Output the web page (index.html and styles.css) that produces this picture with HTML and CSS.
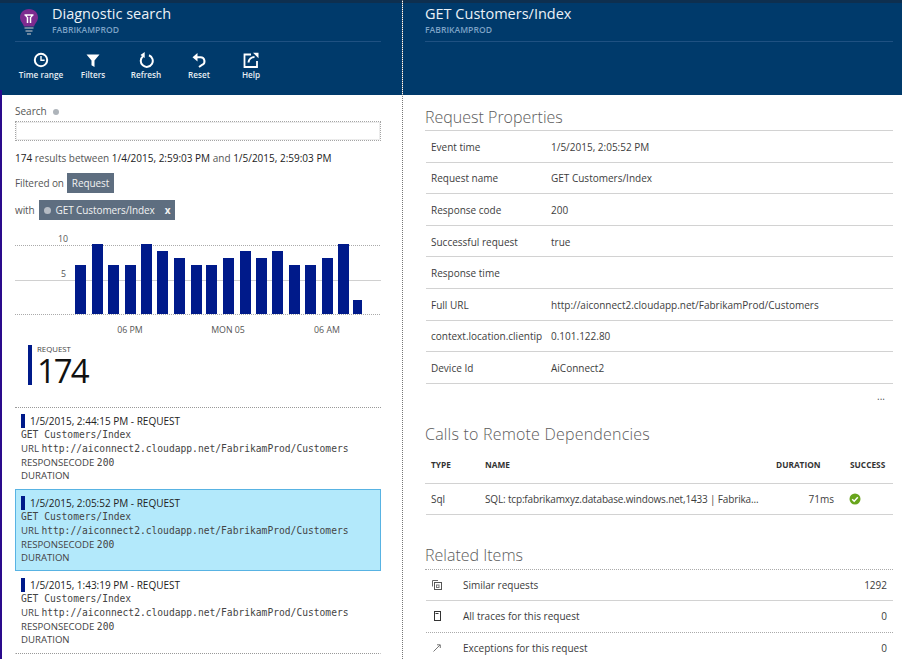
FILE: index.html
```html
<!DOCTYPE html>
<html lang="en">
<head>
<meta charset="utf-8">
<title>Diagnostic search</title>
<link rel="stylesheet" href="styles.css">
</head>
<body>
<div class="page">
  <section class="blade blade-left">
    <header class="head">
      <div class="titlebar">
        <svg class="logo" width="20" height="28" viewBox="0 0 20 28">
          <path d="M10 1C4.6 1 1 4.8 1 9.4c0 3.8 3.1 5.6 3.9 9.1h10.2c.8-3.5 3.900-5.300 3.900-9.100C19 4.800 15.400 1 10 1z" fill="#7d2b8f"/>
          <path d="M5.500 7h9M6.500 7l1.500 2M13.500 7l-1.500 2M8.500 9v6M11.500 9v6" stroke="#fff" stroke-width="1.500" fill="none"/>
          <path d="M5.500 20h9M6.500 23h7M8 26h4" stroke="#8d9eb0" stroke-width="1.500" fill="none"/>
        </svg>
        <div class="titles">
          <h1>Diagnostic search</h1>
          <p class="sub">FABRIKAMPROD</p>
        </div>
      </div>
      <nav class="toolbar">
        <a class="tool tool-time">
          <svg width="16" height="16" viewBox="0 0 16 16"><circle cx="8" cy="8" r="6.200" fill="none" stroke="#fff" stroke-width="2"/><path d="M8 4v4.300h3.600" fill="none" stroke="#fff" stroke-width="1.400"/></svg>
          <span>Time range</span>
        </a>
        <a class="tool tool-filter">
          <svg width="16" height="16" viewBox="0 0 16 16"><path d="M1.500 2.500h13L9.500 8.500V15l-3-1.800V8.500z" fill="#fff"/></svg>
          <span>Filters</span>
        </a>
        <a class="tool tool-refresh">
          <svg width="16" height="16" viewBox="0 0 16 16"><path d="M5 4.200A6 6 0 1 0 11 3.300" fill="none" stroke="#fff" stroke-width="2"/><path d="M6.700 .3v6L2.500 3.300z" fill="#fff" transform="translate(0 -.3)"/></svg>
          <span>Refresh</span>
        </a>
        <a class="tool tool-reset">
          <svg width="16" height="16" viewBox="0 0 16 16"><path d="M3 5.200h6.500a4 4 0 0 1 1.500 7.700L8 15" fill="none" stroke="#fff" stroke-width="2"/><path d="M6.500 1L1.500 5.200l5 4.300z" fill="#fff"/></svg>
          <span>Reset</span>
        </a>
        <a class="tool tool-help">
          <svg width="16" height="16" viewBox="0 0 16 16"><path d="M8 2.500H1.500v12.500h12.500V9" fill="none" stroke="#fff" stroke-width="1.800"/><path d="M5.500 10.500c.3-3.500 3-5.500 6-5.500" fill="none" stroke="#fff" stroke-width="2"/><path d="M10 .8h5.500v5.500z" fill="#fff"/></svg>
          <span>Help</span>
        </a>
      </nav>
    </header>
    <div class="body body-left">
      <label class="search-label">Search <i class="info"></i></label>
      <div class="search-box"></div>
      <p class="results"><b>174</b> results between <b>1/4/2015, 2:59:03 PM</b> and <b>1/5/2015, 2:59:03 PM</b></p>
      <p class="filter-line">Filtered on <span class="tag">Request</span></p>
      <p class="filter-line filter-with">with <span class="tag"><i class="tag-dot"></i>GET Customers/Index<em class="tag-x">x</em></span></p>
      <svg class="chart" width="366" height="104" viewBox="0 0 366 104">
        <g class="grid">
          <line class="dot" x1="0" x2="366" y1="11.500" y2="11.500"/>
          <line class="solid" x1="0" x2="366" y1="46.500" y2="46.500"/>
          <line class="dot" x1="0" x2="366" y1="80.500" y2="80.500"/>
        </g>
        <g class="bars">
          <rect x="60" y="31" width="11" height="49"/><rect x="77" y="10" width="11" height="70"/>
          <rect x="93" y="31" width="11" height="49"/><rect x="110" y="31" width="11" height="49"/>
          <rect x="126" y="10" width="11" height="70"/><rect x="142" y="17" width="11" height="63"/>
          <rect x="159" y="24" width="11" height="56"/><rect x="176" y="31" width="11" height="49"/>
          <rect x="191" y="31" width="11" height="49"/><rect x="208" y="24" width="11" height="56"/>
          <rect x="225" y="17" width="11" height="63"/><rect x="241" y="24" width="11" height="56"/>
          <rect x="257" y="17" width="11" height="63"/><rect x="274" y="31" width="11" height="49"/>
          <rect x="290" y="31" width="11" height="49"/><rect x="307" y="24" width="11" height="56"/>
          <rect x="323" y="10" width="11" height="70"/><rect x="338" y="66" width="9" height="14"/>
        </g>
        <g class="axis">
          <text x="43" y="8">10</text><text x="46" y="43">5</text>
          <text x="115" y="99" text-anchor="middle">06 PM</text>
          <text x="213" y="99" text-anchor="middle">MON 05</text>
          <text x="312" y="99" text-anchor="middle">06 AM</text>
        </g>
      </svg>
      <div class="metric">
        <small>REQUEST</small>
        <strong>174</strong>
      </div>
      <div class="list">
        <article class="item">
          <h3>1/5/2015, 2:44:15 PM - REQUEST</h3>
          <p class="mono">GET Customers/Index</p>
          <p>URL <span class="mono">http://aiconnect2.cloudapp.net/FabrikamProd/Customers</span></p>
          <p>RESPONSECODE <span class="mono">200</span></p>
          <p>DURATION</p>
        </article>
        <article class="item selected">
          <h3>1/5/2015, 2:05:52 PM - REQUEST</h3>
          <p class="mono">GET Customers/Index</p>
          <p>URL <span class="mono">http://aiconnect2.cloudapp.net/FabrikamProd/Customers</span></p>
          <p>RESPONSECODE <span class="mono">200</span></p>
          <p>DURATION</p>
        </article>
        <article class="item">
          <h3>1/5/2015, 1:43:19 PM - REQUEST</h3>
          <p class="mono">GET Customers/Index</p>
          <p>URL <span class="mono">http://aiconnect2.cloudapp.net/FabrikamProd/Customers</span></p>
          <p>RESPONSECODE <span class="mono">200</span></p>
          <p>DURATION</p>
        </article>
      </div>
    </div>
  </section>
  <section class="blade blade-right">
    <header class="head">
      <div class="titlebar titlebar-right">
        <div class="titles">
          <h1>GET Customers/Index</h1>
          <p class="sub">FABRIKAMPROD</p>
        </div>
      </div>
    </header>
    <div class="body body-right">
      <h2 class="h-props">Request Properties</h2>
      <dl class="props">
        <div><dt>Event time</dt><dd>1/5/2015, 2:05:52 PM</dd></div>
        <div><dt>Request name</dt><dd>GET Customers/Index</dd></div>
        <div><dt>Response code</dt><dd>200</dd></div>
        <div><dt>Successful request</dt><dd>true</dd></div>
        <div><dt>Response time</dt><dd></dd></div>
        <div><dt>Full URL</dt><dd>http://aiconnect2.cloudapp.net/FabrikamProd/Customers</dd></div>
        <div><dt>context.location.clientip</dt><dd>0.101.122.80</dd></div>
        <div><dt>Device Id</dt><dd>AiConnect2</dd></div>
      </dl>
      <div class="more">...</div>
      <h2 class="h-calls">Calls to Remote Dependencies</h2>
      <div class="calls calls-head">
        <span class="c-type">TYPE</span><span class="c-name">NAME</span><span class="c-dur">DURATION</span><span class="c-ok">SUCCESS</span>
      </div>
      <div class="calls calls-row">
        <span class="c-type">Sql</span><span class="c-name c-trunc">SQL: tcp:fabrikamxyz.database.windows.net,1433 | Fabrika...</span><span class="c-dur c-num">71ms</span>
        <span class="c-ok"><svg width="12" height="12" viewBox="0 0 12 12"><circle cx="6" cy="6" r="5.500" fill="#68a51c"/><path d="M3.200 6.200l2 2 3.600-4" fill="none" stroke="#fff" stroke-width="1.500"/></svg></span>
      </div>
      <h2 class="h-related">Related Items</h2>
      <ul class="related">
        <li>
          <svg width="12" height="12" viewBox="0 0 12 12"><path d="M1.500 7.500V1.500h5.500" fill="none" stroke="#666"/><rect x="3.500" y="3.500" width="7" height="7" fill="#fff" stroke="#555"/><rect x="5.500" y="6" width="2.500" height="2.500" fill="none" stroke="#777"/></svg>
          <span>Similar requests</span><b>1292</b>
        </li>
        <li>
          <svg width="12" height="12" viewBox="0 0 12 12"><rect x="3.500" y="1.500" width="6" height="9" fill="none" stroke="#333"/><path d="M4.500 3.500h3" stroke="#333"/></svg>
          <span>All traces for this request</span><b>0</b>
        </li>
        <li>
          <svg width="12" height="12" viewBox="0 0 12 12"><path d="M2.500 9.500L9 3M6 2.800h3.300V6" fill="none" stroke="#777"/></svg>
          <span>Exceptions for this request</span><b>0</b>
        </li>
      </ul>
    </div>
  </section>
</div>
</body>
</html>
```
FILE: styles.css
```css
* { box-sizing: border-box; }
html, body { margin: 0; padding: 0; height: 100%; overflow: hidden; background: #fff; }
body { font-family: "Open Sans", "Liberation Sans", sans-serif; font-size: 10px; color: #3b3b3b; }
p, h1, h2, h3, dl, dd, ul { margin: 0; padding: 0; }
.page { display: flex; width: 902px; height: 659px; }
.blade { display: flex; flex-direction: column; }
.blade-left { width: 402px; }
.blade-right { width: 500px; border-left: 1px dotted #777; }
.head { height: 95px; background: #003a6b; border-top: 3px solid #0e2f4f; }
.titlebar { height: 39px; margin: 0 21px 0 15px; display: flex; gap: 13px; border-bottom: 1px solid #1f5182; }
.titlebar-right { margin: 0 9px 0 22px; }
.logo { margin: 5px 0 0 4px; }
.titles h1 { font-size: 14.5px; font-weight: 400; line-height: 22px; color: #eaf1f7; }
.titles .sub { font-size: 8.600px; font-weight: 600; line-height: 11px; color: #7da3c6; }
.toolbar { display: flex; margin-left: 19px; padding-top: 10px; }
.tool { display: flex; flex-direction: column; align-items: center; gap: 1px; color: #e6edf3; font-size: 8.200px; font-weight: 600; line-height: 12px; white-space: nowrap; }
.tool svg { display: block; }
.tool-time { width: 44px; }
.tool-filter { width: 36px; margin-left: 12px; }
.tool-refresh { width: 32px; margin-left: 19px; }
.tool-reset { width: 24px; margin-left: 25px; }
.tool-help { width: 22px; margin-left: 29px; }
.body-left { position: relative; flex: 1; margin-top: -5px; border-left: 2px solid #2a0a8c; padding: 13px 21px 0 13px; overflow: hidden; }
.search-label { display: block; line-height: 16px; color: #555; }
.info { display: inline-block; width: 6px; height: 6px; margin-left: 4px; border-radius: 50%; background: #aeb4ba; }
.search-box { height: 20px; margin-top: 2px; border: 1px dotted #a5a5a5; box-shadow: inset 0 0 0 1px #ececec; }
.results { margin-top: 10px; line-height: 14px; color: #555; }
.results b { font-weight: 400; color: #222; }
.filter-line { display: flex; align-items: center; height: 20px; margin-top: 8px; gap: 3px; color: #555; letter-spacing: -.1px; }
.filter-with { margin-top: 7px; gap: 4px; }
.tag { display: flex; align-items: center; height: 100%; padding: 0 5px; background: #5e6e80; color: #f2f2f2; }
.tag-dot { width: 7px; height: 7px; margin-right: 5px; border-radius: 50%; background: #b6bcc4; }
.tag-x { margin-left: 10px; font-style: normal; font-weight: 700; }
.chart { display: block; margin-top: 14px; }
.grid .dot { stroke: #aaa; stroke-dasharray: 1 1; }
.grid .solid { stroke: #d0d0d0; }
.bars rect { fill: #001a8a; }
.axis text { font-family: "Open Sans", "Liberation Sans", sans-serif; font-size: 8.800px; fill: #555; }
.metric { display: flex; flex-direction: column; height: 40px; margin: 7px 0 0 13px; border-left: 4px solid #001a8a; padding-left: 5px; }
.metric small { font-size: 7.800px; line-height: 9px; color: #444; }
.metric strong { font-size: 33px; font-weight: 400; line-height: 30px; letter-spacing: -2px; color: #111; margin-top: 2px; }
.list { margin-top: 22px; border-top: 1px dotted #999; }
.item { height: 82px; padding: 6px 5px 0; line-height: 13.800px; color: #444; font-size: 9.600px; border: 1px solid transparent; }
.item:first-child { height: 81px; padding-top: 5px; }
.item:last-child { height: 83px; border-bottom: 1px dotted #999; }
.item h3 { display: flex; align-items: center; gap: 5px; font-size: 10px; font-weight: 400; line-height: 14px; color: #222; }
.item h3::before { content: ""; width: 4px; height: 14px; background: #001a8a; }
.mono { font-family: "DejaVu Sans Mono", "Liberation Mono", monospace; font-size: 9.650px; }
.item.selected { background: #b3e9fb; border-color: #58b3e3; }
.body-right { flex: 1; overflow: hidden; padding: 0 9px 0 22px; }
h2 { font-size: 16px; font-weight: 300; line-height: 24px; color: #5c5c5c; }
.h-props { padding-top: 10px; height: 36px; border-bottom: 1px solid #d2d2d2; }
.props { margin-left: 1px; }
.props div { display: flex; align-items: center; height: 31.600px; border-bottom: 1px solid #d2d2d2; padding: 1px 0 0 5px; }
.props dt { width: 120px; color: #3d3d3d; }
.props dd { color: #3d3d3d; }
.more { height: 14px; text-align: right; padding-right: 8px; line-height: 14px; color: #555; margin-top: 5px; }
.h-calls { margin-top: 19px; height: 24px; letter-spacing: .2px; }
.calls { display: flex; align-items: center; margin-left: 1px; padding-left: 5px; border-bottom: 1px solid #d2d2d2; }
.calls-head { height: 38px; font-size: 8.300px; font-weight: 700; color: #333; margin-left: 0; padding: 1px 0 0 6px; }
.calls-row { height: 31.500px; color: #3d3d3d; }
.c-type { width: 54px; }
.c-name { width: 291px; white-space: nowrap; }
.c-trunc { letter-spacing: -.16px; }
.c-dur { width: 74px; }
.c-num { width: 58px; text-align: right; }
.c-ok { display: flex; }
.calls-row .c-ok { margin-left: 15px; }
.h-related { margin-top: 28px; height: 26.500px; border-bottom: 1px dotted #aaa; }
.related { list-style: none; margin-left: 1px; }
.related li { display: flex; align-items: center; height: 31.600px; padding: 0 6px 1px 5px; border-bottom: 1px solid #d2d2d2; }
.related li:nth-child(2) { border-bottom: 1px dotted #aaa; }
.related svg { flex: none; }
.related span { flex: 1; margin-left: 20px; }
.related b { font-weight: 400; }
```
